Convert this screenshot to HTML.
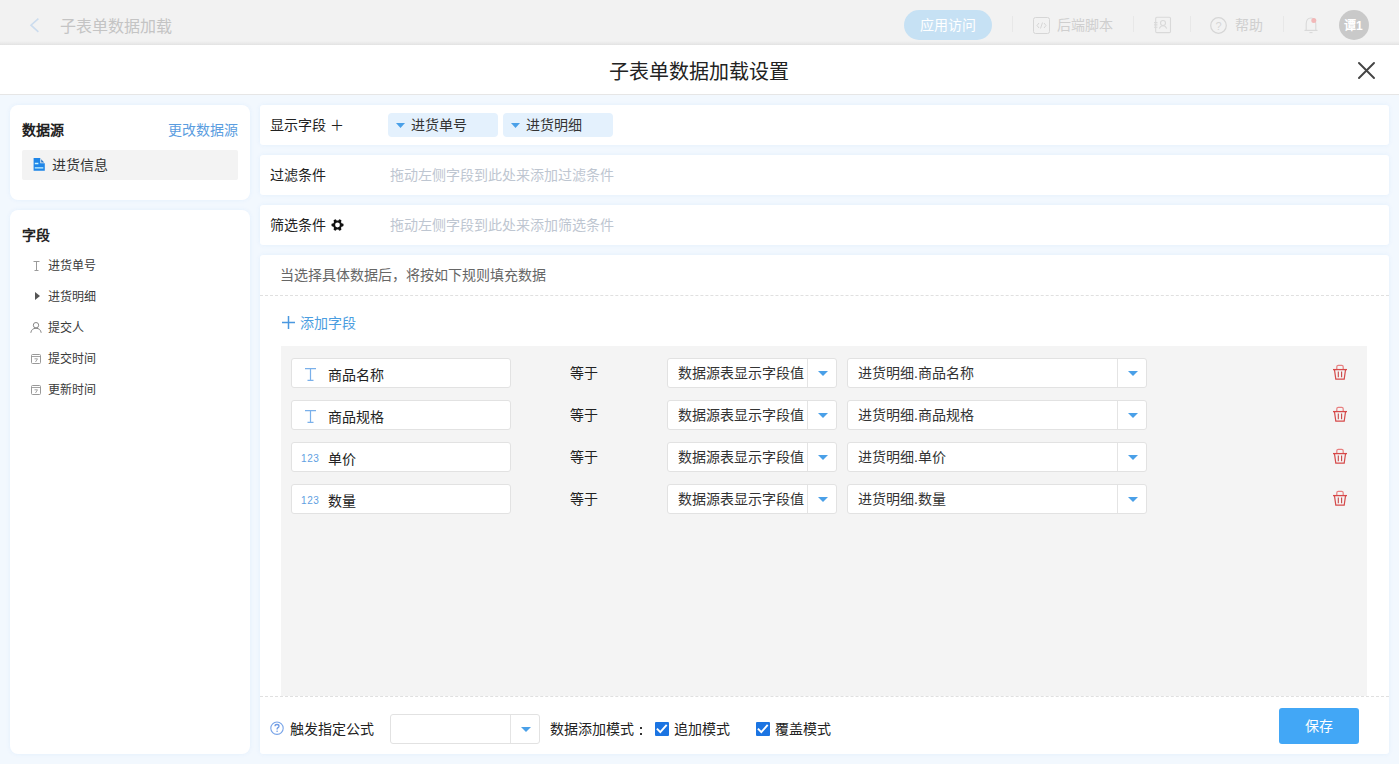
<!DOCTYPE html>
<html lang="zh-CN">
<head>
<meta charset="utf-8">
<style>
*{box-sizing:border-box;margin:0;padding:0}
html,body{width:1399px;height:764px;overflow:hidden}
body{font-family:"Liberation Sans",sans-serif;background:#f2f8fe;position:relative;color:#333;font-size:14px}
.abs{position:absolute}
.top{left:0;top:0;width:1399px;height:45px;background:linear-gradient(#f2f2f2 0,#f2f2f2 41px,#ebebeb 43px,#e2e2e2 45px)}
.hdr{left:0;top:45px;width:1399px;height:50px;background:#fff;border-bottom:1px solid #e6e6e6}
.panel{background:#fff;border-radius:8px;box-shadow:0 0 5px rgba(30,120,220,.07)}
.inp{background:#fff;border:1px solid #e2e2e2;border-radius:3px}
.t{position:absolute;white-space:nowrap;line-height:1}
</style>
</head>
<body>
<!-- top bar -->
<div class="abs top"></div>
<svg class="abs" style="left:28px;top:16px" width="14" height="18" viewBox="0 0 14 18"><path d="M10.4 2.6 L3 9.2 L10.4 15.8" fill="none" stroke="#ccdcee" stroke-width="1.6"/></svg>
<div class="t" style="left:60px;top:19px;font-size:16px;color:#c4c4c4">子表单数据加载</div>

<div class="abs" style="left:904px;top:10px;width:88px;height:30px;border-radius:15px;background:#c6e1f4"></div>
<div class="t" style="left:920px;top:18px;font-size:14px;color:#fff">应用访问</div>
<div class="abs" style="left:1012px;top:16px;width:1px;height:16px;background:#e8e8e8"></div>
<svg class="abs" style="left:1033px;top:17px" width="17" height="17" viewBox="0 0 17 17"><rect x="0.5" y="0.5" width="16" height="16" rx="2" fill="none" stroke="#d6d6d6"/><path d="M6 6 L4 8.5 L6 11 M11 6 L13 8.5 L11 11 M9.5 5.5 L7.5 11.5" fill="none" stroke="#d6d6d6"/></svg>
<div class="t" style="left:1057px;top:18px;font-size:14px;color:#cfcfcf">后端脚本</div>
<div class="abs" style="left:1133px;top:16px;width:1px;height:16px;background:#e8e8e8"></div>
<svg class="abs" style="left:1153px;top:16px" width="19" height="18" viewBox="0 0 19 18"><rect x="2.7" y="1.2" width="14.8" height="15.4" rx="1.2" fill="none" stroke="#d9d9d9" stroke-width="1.1"/><circle cx="10" cy="7" r="2.5" fill="none" stroke="#d9d9d9" stroke-width="1.1"/><path d="M6.3 12.6Q7.5 9.8 10 9.8Q12.5 9.8 13.7 12.6" fill="none" stroke="#d9d9d9" stroke-width="1.1"/><path d="M1 6.6H4.5M1 8.9H4.5M1 11.3H4.5" stroke="#d9d9d9" stroke-width="1.1"/></svg>
<div class="abs" style="left:1190px;top:16px;width:1px;height:16px;background:#e8e8e8"></div>
<svg class="abs" style="left:1210px;top:17px" width="17" height="17" viewBox="0 0 17 17"><circle cx="8.5" cy="8.5" r="7.8" fill="none" stroke="#d6d6d6" stroke-width="1.2"/><text x="8.5" y="12.5" font-size="11" text-anchor="middle" fill="#d6d6d6" font-family="Liberation Sans">?</text></svg>
<div class="t" style="left:1235px;top:18px;font-size:14px;color:#cfcfcf">帮助</div>
<div class="abs" style="left:1283px;top:16px;width:1px;height:16px;background:#e8e8e8"></div>
<svg class="abs" style="left:1302px;top:15px" width="18" height="19" viewBox="0 0 18 19"><path d="M4.2 15.4V9Q4.2 3 9 3Q13.8 3 13.8 9V15.4" fill="none" stroke="#d9d9d9" stroke-width="1.1"/><path d="M2.5 15.4H15.5" stroke="#d9d9d9" stroke-width="1.2"/><path d="M7.5 17.6H10.5" stroke="#d9d9d9" stroke-width="1.1"/><circle cx="11.8" cy="5.6" r="2.5" fill="#f2b8b8"/></svg>
<div class="abs" style="left:1339px;top:10px;width:30px;height:30px;border-radius:50%;background:#c9c9c9"></div>
<div class="t" style="left:1344px;top:20px;font-size:12px;font-weight:bold;color:#fff">谭1</div>

<!-- modal header -->
<div class="abs hdr"></div>
<div class="t" style="left:609px;top:62px;font-size:20px;color:#222">子表单数据加载设置</div>
<svg class="abs" style="left:1357px;top:61px" width="18" height="18" viewBox="0 0 18 18"><path d="M2 2 L17 17 M17 2 L2 17" stroke="#444" stroke-width="1.9" stroke-linecap="round"/></svg>

<!-- left panels -->
<div class="abs panel" style="left:10px;top:105px;width:240px;height:95px"></div>
<div class="t" style="left:22px;top:123px;font-size:14px;font-weight:bold;color:#222">数据源</div>
<div class="t" style="left:168px;top:123px;font-size:14px;color:#5a9de0">更改数据源</div>
<div class="abs" style="left:22px;top:150px;width:216px;height:30px;background:#f3f3f3;border-radius:2px"></div>
<svg class="abs" style="left:33px;top:158px" width="13" height="13" viewBox="0 0 13 13"><path d="M0.6 0H7.3V5.2H11.8V12.7H0.6Z" fill="#1f86e8"/><path d="M8.2 1.3L11.2 4.4H8.2Z" fill="#2a78c8"/><path d="M1.8 5.5H5.4M1.8 9.9H10.3" stroke="#c8f4ff" stroke-width="1.3"/></svg>
<div class="t" style="left:52px;top:158px;font-size:14px;color:#333">进货信息</div>

<div class="abs panel" style="left:10px;top:210px;width:240px;height:544px"></div>
<div class="t" style="left:22px;top:228px;font-size:14px;font-weight:bold;color:#222">字段</div>


<!-- fields -->
<svg class="abs" style="left:33px;top:261px" width="7" height="10" viewBox="0 0 7 10"><path d="M0.5 0.5H6.5M3.5 0.5V9.5M1.5 9.5H5.5" fill="none" stroke="#9a9a9a" stroke-width="1"/></svg>
<div class="t" style="left:48px;top:260px;font-size:12px;color:#3a3a3a">进货单号</div>
<svg class="abs" style="left:35px;top:292px" width="5" height="8" viewBox="0 0 5 8"><path d="M0 0L5 4L0 8Z" fill="#555"/></svg>
<div class="t" style="left:48px;top:291px;font-size:12px;color:#3a3a3a">进货明细</div>
<svg class="abs" style="left:30px;top:322px" width="12" height="11" viewBox="0 0 12 11"><circle cx="6" cy="3.2" r="2.7" fill="none" stroke="#888" stroke-width="1"/><path d="M0.8 10.8Q1.5 6.3 6 6.3Q10.5 6.3 11.2 10.8" fill="none" stroke="#888" stroke-width="1"/></svg>
<div class="t" style="left:48px;top:322px;font-size:12px;color:#3a3a3a">提交人</div>
<svg class="abs" style="left:31px;top:354px" width="10" height="10" viewBox="0 0 10 10"><rect x="0.5" y="0.5" width="9" height="9" rx="1" fill="none" stroke="#999"/><path d="M0.5 2.5H9.5M3.5 4.8H6.5L4.5 8" fill="none" stroke="#999" stroke-width="0.9"/></svg>
<div class="t" style="left:48px;top:353px;font-size:12px;color:#3a3a3a">提交时间</div>
<svg class="abs" style="left:31px;top:385px" width="10" height="10" viewBox="0 0 10 10"><rect x="0.5" y="0.5" width="9" height="9" rx="1" fill="none" stroke="#999"/><path d="M0.5 2.5H9.5M3.5 4.8H6.5L4.5 8" fill="none" stroke="#999" stroke-width="0.9"/></svg>
<div class="t" style="left:48px;top:384px;font-size:12px;color:#3a3a3a">更新时间</div>

<!-- right rows -->
<div class="abs panel" style="left:260px;top:105px;width:1129px;height:40px;border-radius:3px"></div>
<div class="t" style="left:270px;top:118px;font-size:14px;color:#222">显示字段 ＋</div>
<div class="abs panel" style="left:260px;top:155px;width:1129px;height:40px;border-radius:3px"></div>

<div class="abs" style="left:388px;top:113px;width:110px;height:24px;background:#e4f1fd;border-radius:4px"></div>
<svg class="abs" style="left:396px;top:123px" width="9" height="5" viewBox="0 0 9 5"><path d="M0 0H9L4.5 5Z" fill="#4aa0e8"/></svg>
<div class="t" style="left:411px;top:118px;font-size:14px;color:#333">进货单号</div>
<div class="abs" style="left:503px;top:113px;width:110px;height:24px;background:#e4f1fd;border-radius:4px"></div>
<svg class="abs" style="left:511px;top:123px" width="9" height="5" viewBox="0 0 9 5"><path d="M0 0H9L4.5 5Z" fill="#4aa0e8"/></svg>
<div class="t" style="left:526px;top:118px;font-size:14px;color:#333">进货明细</div>
<div class="t" style="left:270px;top:168px;font-size:14px;color:#222">过滤条件</div>
<div class="t" style="left:390px;top:168px;font-size:14px;color:#bec6d1">拖动左侧字段到此处来添加过滤条件</div>
<div class="abs panel" style="left:260px;top:205px;width:1129px;height:40px;border-radius:3px"></div>
<div class="t" style="left:270px;top:218px;font-size:14px;color:#222">筛选条件</div>
<svg class="abs" style="left:331px;top:219px" width="13" height="12" viewBox="-6.5 -6 13 12"><g fill="#111"><circle r="4.5"/><rect x="-1.4" y="-6" width="2.8" height="3" rx="0.8" transform="rotate(30)"/><rect x="-1.4" y="-6" width="2.8" height="3" rx="0.8" transform="rotate(90)"/><rect x="-1.4" y="-6" width="2.8" height="3" rx="0.8" transform="rotate(150)"/><rect x="-1.4" y="-6" width="2.8" height="3" rx="0.8" transform="rotate(210)"/><rect x="-1.4" y="-6" width="2.8" height="3" rx="0.8" transform="rotate(270)"/><rect x="-1.4" y="-6" width="2.8" height="3" rx="0.8" transform="rotate(330)"/></g><circle r="2.4" fill="#fff"/></svg>

<div class="t" style="left:390px;top:218px;font-size:14px;color:#bec6d1">拖动左侧字段到此处来添加筛选条件</div>

<div class="abs panel" style="left:260px;top:255px;width:1129px;height:499px;border-radius:3px"></div>
<div class="t" style="left:280px;top:268px;font-size:14px;color:#666">当选择具体数据后，将按如下规则填充数据</div>
<div class="abs" style="left:260px;top:295px;width:1129px;border-top:1px dashed #e0e0e0"></div>
<svg class="abs" style="left:282px;top:316px" width="13" height="13" viewBox="0 0 13 13"><path d="M6.5 0V13M0 6.5H13" stroke="#4a98e0" stroke-width="1.5"/></svg>
<div class="t" style="left:300px;top:316px;font-size:14px;color:#4a9de0">添加字段</div>
<div class="abs" style="left:281px;top:346px;width:1086px;height:350px;background:#f4f4f4"></div>
<div class="abs" style="left:260px;top:696px;width:1129px;border-top:1px dashed #e0e0e0"></div>

<div class="abs inp" style="left:291px;top:358px;width:220px;height:30px"></div>
<svg class="abs" style="left:305px;top:368px" width="11" height="13" viewBox="0 0 11 13"><path d="M0 0.6H11M5.5 0.6V12.4M2.5 12.4H8.5" fill="none" stroke="#7ab0ea" stroke-width="1.2"/></svg>
<div class="t" style="left:328px;top:368px;font-size:14px;color:#222">商品名称</div>
<div class="t" style="left:570px;top:366px;font-size:14px;color:#222">等于</div>
<div class="abs inp" style="left:667px;top:358px;width:170px;height:30px"></div>
<div class="abs" style="left:807px;top:359px;width:1px;height:28px;background:#e4e4e4"></div>
<svg class="abs" style="left:818px;top:371px" width="10" height="5" viewBox="0 0 10 5"><path d="M0 0H10L5 5Z" fill="#4aa0e8"/></svg>
<div class="t" style="left:678px;top:366px;font-size:14px;color:#333">数据源表显示字段值</div>
<div class="abs inp" style="left:847px;top:358px;width:300px;height:30px"></div>
<div class="abs" style="left:1117px;top:359px;width:1px;height:28px;background:#e4e4e4"></div>
<svg class="abs" style="left:1128px;top:371px" width="10" height="5" viewBox="0 0 10 5"><path d="M0 0H10L5 5Z" fill="#4aa0e8"/></svg>
<div class="t" style="left:858px;top:366px;font-size:14px;color:#333">进货明细.商品名称</div>
<svg class="abs" style="left:1332px;top:363px" width="16" height="18" viewBox="0 0 16 18"><path d="M4.8 6V3.8Q4.8 2.3 6.3 2.3H9.7Q11.2 2.3 11.2 3.8V6" fill="none" stroke="#e88080" stroke-width="1.2"/><path d="M1 6.6H15" stroke="#d64848" stroke-width="1.3"/><path d="M2.5 6.8L3.8 16.2H12.2L13.5 6.8" fill="none" stroke="#d64a4a" stroke-width="1.2"/><path d="M6.3 8.6V14.2M9.6 8.6V14.2" stroke="#c84545" stroke-width="1.1"/></svg>
<div class="abs inp" style="left:291px;top:400px;width:220px;height:30px"></div>
<svg class="abs" style="left:305px;top:410px" width="11" height="13" viewBox="0 0 11 13"><path d="M0 0.6H11M5.5 0.6V12.4M2.5 12.4H8.5" fill="none" stroke="#7ab0ea" stroke-width="1.2"/></svg>
<div class="t" style="left:328px;top:410px;font-size:14px;color:#222">商品规格</div>
<div class="t" style="left:570px;top:408px;font-size:14px;color:#222">等于</div>
<div class="abs inp" style="left:667px;top:400px;width:170px;height:30px"></div>
<div class="abs" style="left:807px;top:401px;width:1px;height:28px;background:#e4e4e4"></div>
<svg class="abs" style="left:818px;top:413px" width="10" height="5" viewBox="0 0 10 5"><path d="M0 0H10L5 5Z" fill="#4aa0e8"/></svg>
<div class="t" style="left:678px;top:408px;font-size:14px;color:#333">数据源表显示字段值</div>
<div class="abs inp" style="left:847px;top:400px;width:300px;height:30px"></div>
<div class="abs" style="left:1117px;top:401px;width:1px;height:28px;background:#e4e4e4"></div>
<svg class="abs" style="left:1128px;top:413px" width="10" height="5" viewBox="0 0 10 5"><path d="M0 0H10L5 5Z" fill="#4aa0e8"/></svg>
<div class="t" style="left:858px;top:408px;font-size:14px;color:#333">进货明细.商品规格</div>
<svg class="abs" style="left:1332px;top:405px" width="16" height="18" viewBox="0 0 16 18"><path d="M4.8 6V3.8Q4.8 2.3 6.3 2.3H9.7Q11.2 2.3 11.2 3.8V6" fill="none" stroke="#e88080" stroke-width="1.2"/><path d="M1 6.6H15" stroke="#d64848" stroke-width="1.3"/><path d="M2.5 6.8L3.8 16.2H12.2L13.5 6.8" fill="none" stroke="#d64a4a" stroke-width="1.2"/><path d="M6.3 8.6V14.2M9.6 8.6V14.2" stroke="#c84545" stroke-width="1.1"/></svg>
<div class="abs inp" style="left:291px;top:442px;width:220px;height:30px"></div>
<div class="t" style="left:301px;top:454px;font-size:10px;color:#5f9fe2;letter-spacing:.6px">123</div>
<div class="t" style="left:328px;top:452px;font-size:14px;color:#222">单价</div>
<div class="t" style="left:570px;top:450px;font-size:14px;color:#222">等于</div>
<div class="abs inp" style="left:667px;top:442px;width:170px;height:30px"></div>
<div class="abs" style="left:807px;top:443px;width:1px;height:28px;background:#e4e4e4"></div>
<svg class="abs" style="left:818px;top:455px" width="10" height="5" viewBox="0 0 10 5"><path d="M0 0H10L5 5Z" fill="#4aa0e8"/></svg>
<div class="t" style="left:678px;top:450px;font-size:14px;color:#333">数据源表显示字段值</div>
<div class="abs inp" style="left:847px;top:442px;width:300px;height:30px"></div>
<div class="abs" style="left:1117px;top:443px;width:1px;height:28px;background:#e4e4e4"></div>
<svg class="abs" style="left:1128px;top:455px" width="10" height="5" viewBox="0 0 10 5"><path d="M0 0H10L5 5Z" fill="#4aa0e8"/></svg>
<div class="t" style="left:858px;top:450px;font-size:14px;color:#333">进货明细.单价</div>
<svg class="abs" style="left:1332px;top:447px" width="16" height="18" viewBox="0 0 16 18"><path d="M4.8 6V3.8Q4.8 2.3 6.3 2.3H9.7Q11.2 2.3 11.2 3.8V6" fill="none" stroke="#e88080" stroke-width="1.2"/><path d="M1 6.6H15" stroke="#d64848" stroke-width="1.3"/><path d="M2.5 6.8L3.8 16.2H12.2L13.5 6.8" fill="none" stroke="#d64a4a" stroke-width="1.2"/><path d="M6.3 8.6V14.2M9.6 8.6V14.2" stroke="#c84545" stroke-width="1.1"/></svg>
<div class="abs inp" style="left:291px;top:484px;width:220px;height:30px"></div>
<div class="t" style="left:301px;top:496px;font-size:10px;color:#5f9fe2;letter-spacing:.6px">123</div>
<div class="t" style="left:328px;top:494px;font-size:14px;color:#222">数量</div>
<div class="t" style="left:570px;top:492px;font-size:14px;color:#222">等于</div>
<div class="abs inp" style="left:667px;top:484px;width:170px;height:30px"></div>
<div class="abs" style="left:807px;top:485px;width:1px;height:28px;background:#e4e4e4"></div>
<svg class="abs" style="left:818px;top:497px" width="10" height="5" viewBox="0 0 10 5"><path d="M0 0H10L5 5Z" fill="#4aa0e8"/></svg>
<div class="t" style="left:678px;top:492px;font-size:14px;color:#333">数据源表显示字段值</div>
<div class="abs inp" style="left:847px;top:484px;width:300px;height:30px"></div>
<div class="abs" style="left:1117px;top:485px;width:1px;height:28px;background:#e4e4e4"></div>
<svg class="abs" style="left:1128px;top:497px" width="10" height="5" viewBox="0 0 10 5"><path d="M0 0H10L5 5Z" fill="#4aa0e8"/></svg>
<div class="t" style="left:858px;top:492px;font-size:14px;color:#333">进货明细.数量</div>
<svg class="abs" style="left:1332px;top:489px" width="16" height="18" viewBox="0 0 16 18"><path d="M4.8 6V3.8Q4.8 2.3 6.3 2.3H9.7Q11.2 2.3 11.2 3.8V6" fill="none" stroke="#e88080" stroke-width="1.2"/><path d="M1 6.6H15" stroke="#d64848" stroke-width="1.3"/><path d="M2.5 6.8L3.8 16.2H12.2L13.5 6.8" fill="none" stroke="#d64a4a" stroke-width="1.2"/><path d="M6.3 8.6V14.2M9.6 8.6V14.2" stroke="#c84545" stroke-width="1.1"/></svg>

<svg class="abs" style="left:270px;top:721px" width="14" height="14" viewBox="0 0 14 14"><circle cx="7" cy="7.2" r="6.2" fill="none" stroke="#78a4e8" stroke-width="1.1"/><path d="M5 5.3Q5 3.5 7 3.5Q9 3.5 9 5.2Q9 6.2 7.7 6.9Q7.1 7.3 7.1 8.4" fill="none" stroke="#6e9ae4" stroke-width="1.3"/><circle cx="7.1" cy="10.3" r="0.8" fill="#6e9ae4"/></svg>
<div class="t" style="left:290px;top:722px;font-size:14px;color:#222">触发指定公式</div>
<div class="abs inp" style="left:390px;top:714px;width:150px;height:30px"></div>
<div class="abs" style="left:510px;top:715px;width:1px;height:28px;background:#e4e4e4"></div>
<svg class="abs" style="left:521px;top:727px" width="10" height="5" viewBox="0 0 10 5"><path d="M0 0H10L5 5Z" fill="#4aa0e8"/></svg>
<div class="t" style="left:550px;top:722px;font-size:14px;color:#222">数据添加模式</div>
<div class="abs" style="left:640px;top:727px;width:2px;height:2px;background:#333"></div><div class="abs" style="left:640px;top:733px;width:2px;height:2px;background:#333"></div>
<svg class="abs" style="left:655px;top:722px" width="14" height="14" viewBox="0 0 14 14"><rect width="14" height="14" rx="1" fill="#1b74e2"/><path d="M1.9 6.6L5.3 10.2L11.7 2.8" fill="none" stroke="#fff" stroke-width="1.9"/></svg>
<div class="t" style="left:674px;top:722px;font-size:14px;color:#222">追加模式</div>
<svg class="abs" style="left:756px;top:722px" width="14" height="14" viewBox="0 0 14 14"><rect width="14" height="14" rx="1" fill="#1b74e2"/><path d="M1.9 6.6L5.3 10.2L11.7 2.8" fill="none" stroke="#fff" stroke-width="1.9"/></svg>
<div class="t" style="left:775px;top:722px;font-size:14px;color:#222">覆盖模式</div>
<div class="abs" style="left:1279px;top:708px;width:80px;height:36px;background:#42a7f6;border-radius:3px"></div>
<div class="t" style="left:1305px;top:719px;font-size:14px;color:#fff">保存</div>
</body>
</html>
